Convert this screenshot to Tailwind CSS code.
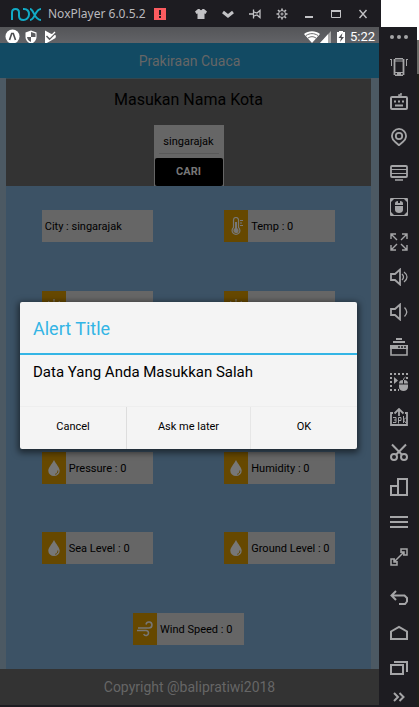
<!DOCTYPE html>
<html lang="id">
<head>
<meta charset="utf-8">
<meta name="viewport" content="width=device-width, initial-scale=1">
<title>NoxPlayer - Prakiraan Cuaca</title>
<script src="https://cdn.jsdelivr.net/npm/@tailwindcss/browser@4"></script>
</head>
<body class="flex min-h-screen flex-col bg-[#1d1c21] font-[Roboto,sans-serif] text-black">

<svg class="hidden" aria-hidden="true">
  <symbol id="drop" viewBox="0 0 16 18"><path fill="#777" d="M8 1C6 5 2.300 8.500 2.300 11.700a5.700 5.300 0 0 0 11.400 0C13.700 8.500 10 5 8 1z"/><path fill="none" stroke="#664800" d="M11.800 11.500c.2 2-.8 3.300-2.600 3.800"/></symbol>
  <symbol id="sun" viewBox="0 0 18 18"><g fill="none" stroke="#777" stroke-width="1.300"><circle cx="9" cy="9" r="4"/><path d="M9 0v3M9 15v3M0 9h3M15 9h3M2.600 2.600l2 2M13.400 13.400l2 2M2.600 15.400l2-2M13.400 4.600l2-2"/></g></symbol>
</svg>

<header class="flex h-[27px] shrink-0 bg-white">
  <div class="flex flex-1 items-center bg-[#1d1c21] pr-[5px] pl-2.5 text-[#b9b9bd]">
    <svg class="h-3.5 w-8" viewBox="0 0 32 14" fill="none" stroke="#12aac5" stroke-width="2"><path d="M2 13V5.500C2 3 3.500 2 5.500 2S9 3 9 5.500V9c0 2.500 2 4 4.500 4S19 11 19 7.500 17 2 14 2h-1"/><path d="M20 2c4 0 4 11 11 11M31 2c-6 0-6 11-11 11"/></svg>
    <span class="ml-1.5 font-['Noto_Sans',sans-serif] text-xs whitespace-nowrap">NoxPlayer 6.0.5.2</span>
    <span class="ml-2 flex h-3 w-3 shrink-0 items-center justify-center bg-[#fb5b5f]"><svg class="h-3 w-3" viewBox="0 0 12 12" fill="#1d1c21"><path d="M5 2h2v5H5zM5 8h2v2H5z"/></svg></span>
    <nav class="ml-auto flex text-[#c2c2c5]">
      <button aria-label="Tema" class="flex w-[27px] justify-center"><svg class="h-3 w-3" viewBox="0 0 12 12" fill="currentColor"><path d="M3 1h1.500c.5 1.500 2.500 1.500 3 0H9l3 2.500L10.500 6 9.500 5.500V11h-7V5.500l-1 .5L0 3.500z"/></svg></button>
      <button aria-label="Menu" class="flex w-[27px] justify-center"><svg class="h-3 w-3" viewBox="0 0 12 12" fill="none" stroke="currentColor" stroke-width="3"><path d="M1 4l5 4 5-4"/></svg></button>
      <button aria-label="Sematkan" class="flex w-[27px] justify-center"><svg class="h-3 w-3" viewBox="0 0 12 12" fill="none" stroke="currentColor" stroke-width="1.300"><path d="M0 6h4M4.500 1.500v9M5 4l3 1 3-2.500v7L8 7 5 8"/></svg></button>
      <button aria-label="Pengaturan" class="flex w-[27px] justify-center"><svg class="h-3 w-3" viewBox="0 0 12 12" fill="none" stroke="currentColor"><circle cx="6" cy="6" r="3.500"/><circle cx="6" cy="6" r="1"/><path stroke-width="1.600" d="M6 .5v2M6 9.500v2M.5 6h2M9.500 6h2M2 2l1.500 1.500M8.500 8.500L10 10M2 10l1.500-1.500M8.500 3.500L10 2"/></svg></button>
      <button aria-label="Kecilkan" class="flex w-[27px] justify-center"><svg class="h-3 w-3" viewBox="0 0 12 12" fill="currentColor"><path d="M2 8h8v2H2z"/></svg></button>
      <button aria-label="Besarkan" class="flex w-[27px] justify-center"><svg class="h-3 w-3" viewBox="0 0 12 12"><path fill="none" stroke="currentColor" d="M1.500 2.500h9v7h-9z"/><path fill="currentColor" d="M1 2h10v2H1z"/></svg></button>
      <button aria-label="Tutup" class="flex w-[27px] justify-center"><svg class="h-3 w-3" viewBox="0 0 12 12" fill="none" stroke="currentColor" stroke-width="1.400"><path d="M2.500 2l7 8M9.500 2l-7 8"/></svg></button>
    </nav>
  </div>
  <div class="w-[38px] bg-white"></div>
</header>

<div class="flex flex-1">
  <main class="relative flex flex-1 flex-col bg-[#4c5963]">
    <div class="flex h-4 shrink-0 items-center gap-1 overflow-hidden bg-linear-to-b from-[#545558] to-[#626367] pr-1 pl-[5px] text-white">
      <svg class="mt-1 h-4 w-4 shrink-0" viewBox="0 0 16 16"><circle cx="7.500" cy="7.500" r="7" fill="#fff"/><path d="M4.500 11L6.700 4.500h1.600L10.500 11" fill="none" stroke="#4c4d50" stroke-width="1.600"/></svg>
      <svg class="mt-1 h-4 w-4 shrink-0" viewBox="0 0 16 16"><path fill="#fff" d="M6 1.500L11.500 3.500V8c0 3-2 5.500-5.500 7C2.500 13.500.5 11 .5 8V3.500z"/><path fill="#5c5d60" d="M6 3v5h4.500V4.600zM6 8H2c.3 2.500 2 4.200 4 5z"/></svg>
      <svg class="mt-1 h-4 w-4 shrink-0" viewBox="0 0 16 16"><path fill="#fff" d="M0 1.500l5.500 3L11 6.500 10.500 9 1 14.500H0z"/><path fill="none" stroke="#5c5d60" stroke-width="1.600" d="M1.500 7l3 3L11 3.500"/><path fill="none" stroke="#fff" stroke-width="1.300" d="M3 6l2 2 5-5"/></svg>
      <div class="mt-1 ml-auto flex items-center">
        <svg class="h-3 w-4" viewBox="0 0 16 12"><path fill="#fff" d="M0 3C4.500-.6 11.500-.6 16 3L8 12z"/><path fill="none" stroke="#5c5d60" stroke-width=".9" d="M2 4.500c4-2.500 8-2.500 12 0M4 7c2.500-1.800 5.500-1.800 8 0"/></svg>
        <svg class="h-3 w-3" viewBox="0 0 12 12"><path fill="#aaa" d="M0 12L11 0v12z"/><path fill="#fff" d="M0 12l8-8.700V12z"/></svg>
        <svg class="ml-1 h-3 w-2.5" viewBox="0 0 10 12"><path fill="#fff" d="M1 1h2V0h4v1h2v11H1z"/><path fill="#4c4d50" d="M6.500 2L2.500 7H5l-1 4 4-5H5.500z"/></svg>
        <span class="ml-1 text-[13px] leading-3">5:22</span>
      </div>
    </div>

    <h1 class="flex h-[35px] shrink-0 items-center justify-center bg-[#124a63] text-sm text-[#666]">Prakiraan Cuaca</h1>

    <form class="mr-2 ml-1.5 flex h-[108px] shrink-0 flex-col items-center border-t border-[#33474f] bg-[#333]">
      <label for="kota" class="flex h-[46px] items-center pb-1 text-base">Masukan Nama Kota</label>
      <div class="flex w-[70px] flex-1 flex-col bg-[#666] px-px">
        <div class="flex h-[33px] items-end px-1 pb-1">
          <input id="kota" value="singarajak" class="h-6 w-full border-b border-[#595959] bg-transparent text-center text-[11px] outline-none">
        </div>
        <button type="button" class="flex-1 rounded-xs bg-black text-[11px] font-bold text-[#777]">CARI</button>
      </div>
    </form>

    <section class="mr-2 ml-1.5 grid flex-1 grid-rows-6 bg-[#3c5265] text-[11px] whitespace-nowrap">
      <div class="flex items-center justify-around">
        <div class="flex h-8 w-[111px] items-center bg-[#666] pt-0.5 pl-[3px]">City : singarajak</div>
        <div class="flex h-8 w-[111px] items-center gap-[3px] bg-[#666]">
          <span class="flex h-8 w-6 items-center justify-center bg-[#664800]"><svg class="h-[18px] w-4" viewBox="0 0 16 18" fill="none" stroke="#777" stroke-width="1.200"><path d="M5.500 10.500V3a2.500 2.500 0 0 1 5 0v7.500a3.900 3.900 0 1 1-5 0z"/><circle cx="8" cy="13.500" r="2" fill="#777"/><path stroke-width="2" d="M8 5v8"/><path d="M12 3.500h3M12 6h2M12 8.500h3"/></svg></span><span class="pt-0.5">Temp : 0</span>
        </div>
      </div>
      <div class="flex items-center justify-around">
        <div class="flex h-8 w-[111px] bg-[#666]"><span class="flex w-6 items-center justify-center bg-[#664800]"><svg class="h-4 w-4"><use href="#sun"/></svg></span></div>
        <div class="flex h-8 w-[111px] bg-[#666]"><span class="flex w-6 items-center justify-center bg-[#664800]"><svg class="h-4 w-4"><use href="#sun"/></svg></span></div>
      </div>
      <div class="flex items-center justify-around">
        <div class="h-8 w-[111px] bg-[#666]"></div>
        <div class="h-8 w-[111px] bg-[#666]"></div>
      </div>
      <div class="flex items-center justify-around">
        <div class="flex h-8 w-[111px] items-center gap-[3px] bg-[#666]"><span class="flex h-8 w-6 items-center justify-center bg-[#664800]"><svg class="h-[18px] w-4"><use href="#drop"/></svg></span><span class="pt-0.5">Pressure : 0</span></div>
        <div class="flex h-8 w-[111px] items-center gap-[3px] bg-[#666]"><span class="flex h-8 w-6 items-center justify-center bg-[#664800]"><svg class="h-[18px] w-4"><use href="#drop"/></svg></span><span class="pt-0.5">Humidity : 0</span></div>
      </div>
      <div class="flex items-center justify-around">
        <div class="flex h-8 w-[111px] items-center gap-[3px] bg-[#666]"><span class="flex h-8 w-6 items-center justify-center bg-[#664800]"><svg class="h-[18px] w-4"><use href="#drop"/></svg></span><span class="pt-0.5">Sea Level : 0</span></div>
        <div class="flex h-8 w-[111px] items-center gap-[3px] bg-[#666]"><span class="flex h-8 w-6 items-center justify-center bg-[#664800]"><svg class="h-[18px] w-4"><use href="#drop"/></svg></span><span class="pt-0.5">Ground Level : 0</span></div>
      </div>
      <div class="flex items-center justify-around">
        <div class="flex h-8 w-[111px] items-center gap-[3px] bg-[#666]"><span class="flex h-8 w-6 items-center justify-center bg-[#664800]"><svg class="h-4 w-4" viewBox="0 0 16 16" fill="none" stroke="#777" stroke-width="1.500"><path d="M1 7h11a3 3 0 1 0-3-3.500M0 9.500h9a2.500 2.500 0 1 1-2.300 3.500"/></svg></span><span class="pt-0.5">Wind Speed : 0</span></div>
      </div>
    </section>

    <footer class="flex h-9 shrink-0 items-center justify-center bg-[#333] text-sm text-[#666]">Copyright @balipratiwi2018</footer>
    <div class="h-0.5 shrink-0 bg-[#1d1c21]"></div>

    <div class="absolute inset-x-0 top-4 bottom-0 flex items-center pr-[22px] pl-5">
      <div role="alertdialog" aria-labelledby="judul" aria-describedby="pesan" class="w-full rounded-xs bg-[#f4f4f4] shadow-[0_2px_6px_2px_rgba(0,0,0,0.5)]">
        <h2 id="judul" class="flex h-[53px] items-center border-b-2 border-[#33b5e5] px-[13px] pt-[3px] text-lg text-[#33b5e5]">Alert Title</h2>
        <p id="pesan" class="h-[51px] px-[13px] pt-[7px] text-[15px] leading-5">Data Yang Anda Masukkan Salah</p>
        <div class="grid h-[43px] grid-cols-[107fr_124fr_106fr] border-t border-[#eee] text-[11px]">
          <button class="border-r border-[#ddd]">Cancel</button>
          <button class="border-r border-[#e6e6e6]">Ask me later</button>
          <button>OK</button>
        </div>
      </div>
    </div>
  </main>

  <aside class="flex w-[38px] shrink-0 flex-col bg-[#1d1c21] pl-0.5 text-[#a5a5a7]">
    <button aria-label="Lainnya" class="flex h-[22px] items-center justify-center"><svg class="h-[18px] w-[18px]" viewBox="0 0 18 18" fill="currentColor"><circle cx="2" cy="8" r="2"/><circle cx="9" cy="8" r="2"/><circle cx="16" cy="8" r="2"/></svg></button>
    <button aria-label="Goyang" class="flex h-[35px] items-center justify-center"><svg class="h-[18px] w-[18px]" viewBox="0 0 18 18" fill="none" stroke="currentColor"><path stroke-width="1.500" d="M5 .8h8M5 17.200h8"/><path stroke-width="1.800" d="M4.500 1v16M13.500 1v16"/><path d="M4 3h10M4 14.500h10M1.500 1v7M16.500 1v7M0 1.500h2M16 1.500h2"/><path stroke-width="2" d="M7 16h4"/></svg></button>
    <button aria-label="Papan ketik" class="flex h-[35px] items-center justify-center"><svg class="h-[18px] w-[18px]" viewBox="0 0 18 18" fill="none" stroke="currentColor"><rect x="1" y="4" width="16" height="12" rx="1" stroke-width="2"/><path stroke-width="1.500" d="M9 3.500V2h2V0"/><path stroke-width="2" d="M4 8.500h2M8 8.500h2M12 8.500h2M5 12.500h8"/></svg></button>
    <button aria-label="Lokasi" class="flex h-[35px] items-center justify-center"><svg class="h-[18px] w-[18px]" viewBox="0 0 18 18" fill="none" stroke="currentColor" stroke-width="1.800"><path d="M9 17.200l-4-3.500a7 7 0 1 1 8 0z"/><circle cx="9" cy="8" r="3.200"/></svg></button>
    <button aria-label="Layar" class="flex h-[35px] items-center justify-center"><svg class="h-[18px] w-[18px]" viewBox="0 0 18 18" fill="none" stroke="currentColor"><rect x="1" y="3" width="16" height="11" rx="1" stroke-width="1.800"/><path d="M1 6.500h16M1 10.500h16"/><path stroke-width="1.500" d="M5 17h8"/></svg></button>
    <button aria-label="Tetikus" class="flex h-[35px] items-center justify-center"><svg class="h-[18px] w-[18px]" viewBox="0 0 18 18"><path fill="none" stroke="currentColor" d="M.5.5h17v17H.5z"/><path fill="currentColor" d="M1 1h3L1 4zM17 1h-3l3 3zM1 17h3l-3-3zM17 17h-3l3-3zM5 8h8v4c0 4-8 4-8 0zM5 7V5.500C5 4 6 3 8 3v2h2V3c2 0 3 1 3 2.500V7z"/></svg></button>
    <button aria-label="Layar penuh" class="flex h-[35px] items-center justify-center"><svg class="h-[18px] w-[18px]" viewBox="0 0 18 18" fill="none" stroke="currentColor" stroke-width="1.400"><path d="M6 1H1v5M12 1h5v5M6 17H1v-5M12 17h5v-5M1 1l6 6M17 1l-6 6M1 17l6-6M17 17l-6-6"/></svg></button>
    <button aria-label="Naikkan volume" class="flex h-[35px] items-center justify-center"><svg class="h-[18px] w-[18px]" viewBox="0 0 18 18" fill="none" stroke="currentColor" stroke-width="1.800"><path d="M1 6h4l5-4.500v15L5 12H1z"/><path stroke-width="1.300" d="M12 6c1.800 1.800 1.800 4.200 0 6M14 4c4 3 4 7 0 10"/></svg></button>
    <button aria-label="Turunkan volume" class="flex h-[35px] items-center justify-center"><svg class="h-[18px] w-[18px]" viewBox="0 0 18 18" fill="none" stroke="currentColor" stroke-width="1.800"><path d="M1 6h4l5-4.500v15L5 12H1z"/><path stroke-width="1.300" d="M14.500 4.500c3 3 3 6 0 9"/></svg></button>
    <button aria-label="Multi jendela" class="flex h-[35px] items-center justify-center"><svg class="h-[18px] w-[18px]" viewBox="0 0 18 18"><path fill="currentColor" d="M6 0h6v2H6zM3 3h12v2H3zM0 7h18v4H0z"/><path fill="none" stroke="currentColor" stroke-width="1.600" d="M1 8h16v9H1z"/><path stroke="#1d1c21" stroke-width="1.500" d="M8 9h2M11 9h2M14 9h2"/></svg></button>
    <button aria-label="Rekam makro" class="flex h-[35px] items-center justify-center"><svg class="h-[18px] w-[18px]" viewBox="0 0 18 18"><path fill="none" stroke="currentColor" stroke-width="2" stroke-dasharray="2 2" d="M0 1h18M1 4v14M4 17h5M17 4v3"/><path fill="currentColor" d="M4 4l4 3.500L4 11zM9 11.500h9V14c0 5.300-9 5.300-9 0zM9 10.500c0-2.500 1.500-3.500 4-3.500v3.500zM14 7c2.500 0 4 1 4 3.500h-4z"/><path fill="none" stroke="currentColor" d="M13.500 7c0-2 1-2 2-3"/></svg></button>
    <button aria-label="Pasang 3pk" class="flex h-[35px] items-center justify-center"><svg class="h-[18px] w-[18px]" viewBox="0 0 18 18" fill="none" stroke="currentColor" stroke-width="1.800"><path d="M3 5H1v12h16V5h-2M9 8V1M4.500 5.500L9 1l4.500 4.500"/><path stroke-width="1" d="M3 9.500h3v5H3M4 12h2M8.500 15.500v-6h2.500v3H9M13.500 8v7M16 9.500l-2.500 2.500 2.500 3"/></svg></button>
    <button aria-label="Tangkapan layar" class="flex h-[35px] items-center justify-center"><svg class="h-[18px] w-[18px]" viewBox="0 0 18 18" fill="none" stroke="currentColor" stroke-width="2"><circle cx="4" cy="14" r="3"/><circle cx="14" cy="14" r="3"/><path d="M2 1.500l10 10.300M16 1.500L6 11.800"/></svg></button>
    <button aria-label="Putar layar" class="flex h-[35px] items-center justify-center"><svg class="h-[18px] w-[18px]" viewBox="0 0 18 18" fill="none" stroke="currentColor" stroke-width="2"><path d="M8 1h9v16H8zM8 8H1v9h7"/></svg></button>
    <button aria-label="Menu Android" class="flex h-[35px] items-center justify-center"><svg class="h-[18px] w-[18px]" viewBox="0 0 18 18" fill="currentColor"><path d="M0 3h18v2H0zM0 8h18v2H0zM0 13h18v2H0z"/></svg></button>
    <button aria-label="Ubah ukuran" class="flex h-[35px] items-center justify-center"><svg class="h-[18px] w-[18px]" viewBox="0 0 18 18" fill="none" stroke="currentColor" stroke-width="1.500"><path d="M11 5V1h6v6h-4M5 11H1v6h6v-4M4 14L14 4M11.500 4H14v2.500M4 11.500V14h2.500"/></svg></button>
    <div class="mt-auto flex flex-col">
      <button aria-label="Kembali" class="flex h-[35px] items-center justify-center"><svg class="h-[18px] w-[18px]" viewBox="0 0 18 18" fill="none" stroke="currentColor" stroke-width="2"><path d="M6 2L1.500 6.500 6 11M2 6.500h12.500L17 9v3.500L15 15H9"/></svg></button>
      <button aria-label="Beranda" class="flex h-[35px] items-center justify-center"><svg class="h-[18px] w-[18px]" viewBox="0 0 18 18" fill="none" stroke="currentColor" stroke-width="2"><path d="M1 7.500L9 3l8 4.500V15H1z"/></svg></button>
      <button aria-label="Aplikasi terbaru" class="flex h-[35px] items-center justify-center"><svg class="h-[18px] w-[18px]" viewBox="0 0 18 18" fill="none" stroke="currentColor" stroke-width="2"><path d="M1 6h12v9H1zM4 3h13v10"/></svg></button>
      <button aria-label="Ciutkan" class="flex h-[22px] items-center justify-center"><svg class="h-[18px] w-[18px]" viewBox="0 0 18 18" fill="none" stroke="currentColor" stroke-width="2"><path d="M4 6l4 4-4 4M9.500 6l4 4-4 4"/></svg></button>
    </div>
  </aside>
  <div class="flex w-0.5 shrink-0 flex-col bg-[#1e2019]">
    <div class="h-[13px] bg-white"></div>
    <div class="h-[34px] bg-[#6b6b66]"></div>
  </div>
</div>
</body>
</html>
